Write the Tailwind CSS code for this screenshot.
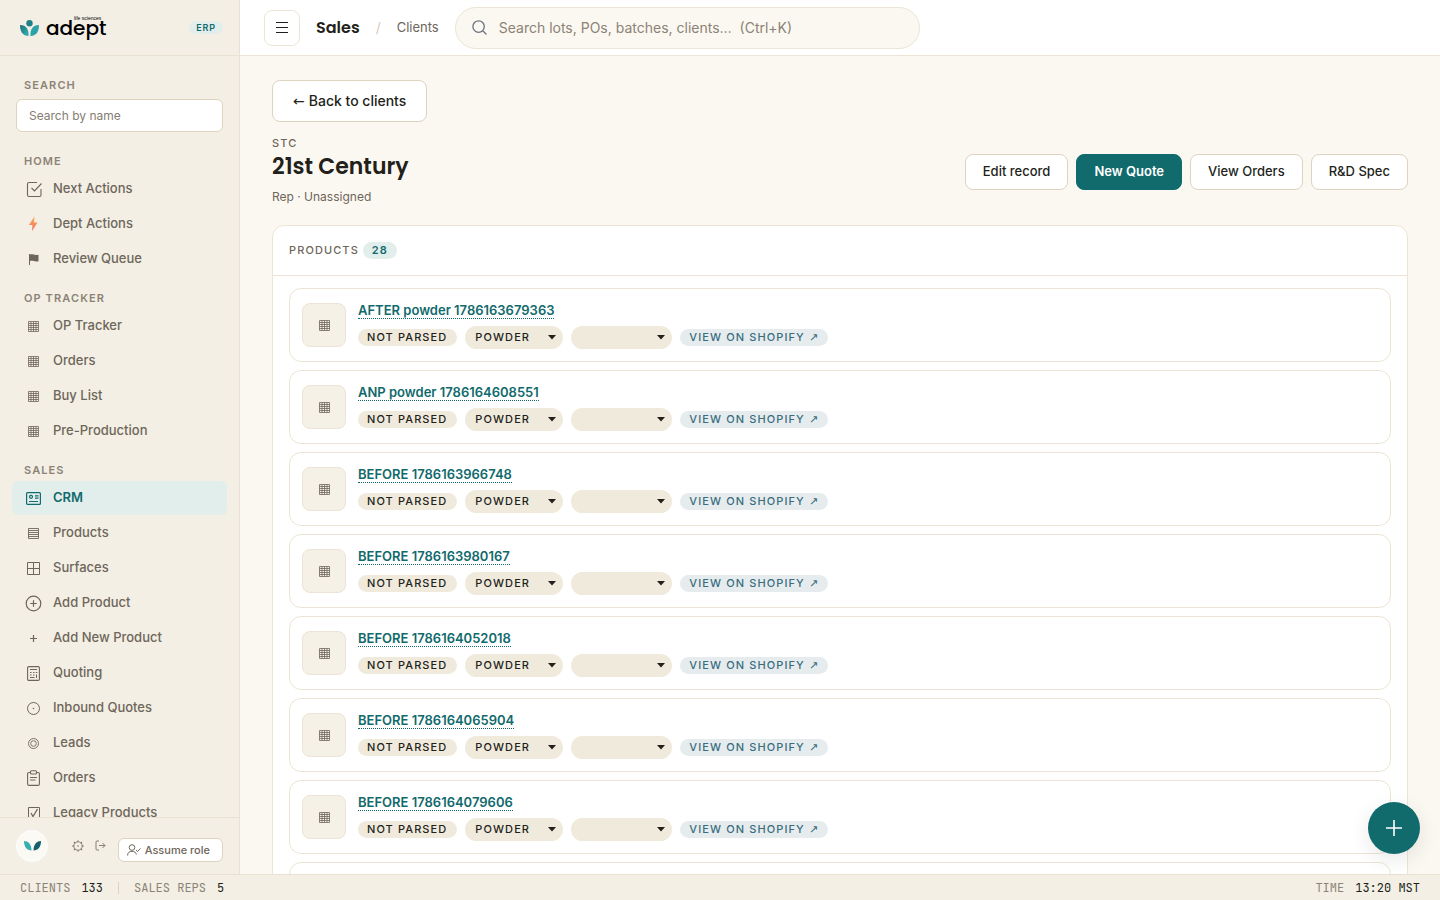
<!DOCTYPE html>
<html lang="en">

<head>
    <meta charset="UTF-8">
    <meta name="viewport" content="width=device-width, initial-scale=1.0">
    <script src="https://cdn.jsdelivr.net/npm/@tailwindcss/browser@4"></script>
    <title>21st Century - Clients - Adept ERP</title>
</head>

<body class="flex flex-col h-screen overflow-hidden font-['Inter','Liberation_Sans',sans-serif] bg-[#fbf8f1] text-[#231f1a]">
    <!-- icon sprite -->
    <svg class="hidden" aria-hidden="true">
        <symbol id="i-grid" viewBox="0 0 11 11">
            <path d="M.5.5h10v10H.5zM.5 2.5h10M.5 4.5h10M.5 6.5h10M.5 8.5h10M3 .5v10M5.5 .5v10M8 .5v10" fill="none" stroke="currentColor" stroke-width=".8" />
        </symbol>
        <symbol id="i-rows" viewBox="0 0 11 11">
            <path d="M.5.5h10v10H.5zM.5 2.5h10M.5 4.5h10M.5 6.5h10M.5 8.5h10" fill="none" stroke="currentColor" stroke-width=".9" />
        </symbol>
    </svg>

    <div class="flex flex-1 min-h-0">
        <!-- SIDEBAR -->
        <aside class="flex flex-col w-60 shrink-0 bg-[#f3efe4] border-r border-[#e9e2d3]">
            <div class="flex items-center justify-between h-14 px-4 pl-5 border-b border-[#e9e2d3] shrink-0">
                <a href="#" class="flex items-center gap-[7px] text-black" aria-label="adept life sciences">
                    <svg class="w-[19px] h-4" viewBox="0 0 19 16">
                        <defs>
                            <linearGradient id="leaf" x1="0" y1="0" x2="1" y2="1">
                                <stop offset="0" stop-color="#1b7078" />
                                <stop offset="1" stop-color="#35b5b8" />
                            </linearGradient>
                        </defs>
                        <circle cx="9.5" cy="3.2" r="3.2" fill="#1f7f86" />
                        <path d="M0 5c5 0 9 3 8.600 11C3 16 0 12 0 5z" fill="url(#leaf)" />
                        <path d="M19 5c-5 0-9 3-8.600 11C16 16 19 12 19 5z" fill="#2ba3a8" />
                    </svg>
                    <span class="relative font-['Poppins','DejaVu_Sans',sans-serif] text-xl leading-6 font-medium">adept<span class="absolute left-7 top-0 font-['Liberation_Sans',sans-serif] text-[5px] leading-none whitespace-nowrap">life sciences</span></span>
                </a>
                <span class="px-[7px] rounded-full bg-[#e2eeeb] text-[#116a6c] text-[9px] leading-[13px] font-semibold tracking-widest">ERP</span>
            </div>

            <nav class="flex-1 min-h-0 overflow-hidden px-3 text-[13px] font-medium text-[#6e665b]">
                <label for="nav-search" class="block pt-[22px] pb-[7px] px-3 text-[11px] leading-[14px] font-semibold tracking-widest text-[#8c8376]">SEARCH</label>
                <div class="px-1 pb-2">
                    <input id="nav-search" type="text" placeholder="Search by name"
                        class="block w-full h-[33px] px-3 rounded-md border border-[#ddd3bf] bg-white text-xs font-normal placeholder:text-[#857d71]">
                </div>

                <h2 class="px-3 pt-[14px] pb-1 text-[11px] leading-[14px] font-semibold tracking-widest text-[#8c8376]">HOME</h2>
                <a href="#" class="flex items-center h-[34px] mb-px px-3 gap-2.5 rounded-md">
                    <span class="flex justify-center w-[19px]"><svg class="w-[18px] h-[18px]" viewBox="0 0 18 18" fill="none" stroke="currentColor" stroke-width="1.1"><path d="M12 2.500H4A1.500 1.500 0 0 0 2.500 4v11A1.500 1.500 0 0 0 4 16.500h10.500A1.500 1.500 0 0 0 16 15V9M6.500 8l3 3L16.500 3.500" /></svg></span>
                    <span class="pb-px">Next Actions</span>
                </a>
                <a href="#" class="flex items-center h-[34px] mb-px px-3 gap-2.5 rounded-md">
                    <span class="flex justify-center w-[19px]">
                        <svg class="w-[9px] h-[14px]" viewBox="0 0 9 14">
                            <defs>
                                <linearGradient id="bolt" x1="0" y1="0" x2="0" y2="1">
                                    <stop offset="0" stop-color="#f9ae50" />
                                    <stop offset="1" stop-color="#f36a62" />
                                </linearGradient>
                            </defs>
                            <path d="M5 0L0 8h3.500L3 14l5.500-8.500H5L5.500 0z" fill="url(#bolt)" />
                        </svg>
                    </span>
                    <span class="pb-px">Dept Actions</span>
                </a>
                <a href="#" class="flex items-center h-[34px] mb-px px-3 gap-2.5 rounded-md">
                    <span class="flex justify-center w-[19px]"><svg class="w-[10px] h-[11px]" viewBox="0 0 10 11" fill="currentColor"><path d="M0 0h1v11H0zM1 .5c3-.8 4 1.200 8.500.3v6.400c-4 1-5.500-1-8.500-.2z" /></svg></span>
                    <span class="pb-px">Review Queue</span>
                </a>

                <h2 class="px-3 pt-[14px] pb-1 text-[11px] leading-[14px] font-semibold tracking-widest text-[#8c8376]">OP TRACKER</h2>
                <a href="#" class="flex items-center h-[34px] mb-px px-3 gap-2.5 rounded-md">
                    <span class="flex justify-center w-[19px]"><svg class="w-[11px] h-[11px]"><use href="#i-grid" /></svg></span>
                    <span class="pb-px">OP Tracker</span>
                </a>
                <a href="#" class="flex items-center h-[34px] mb-px px-3 gap-2.5 rounded-md">
                    <span class="flex justify-center w-[19px]"><svg class="w-[11px] h-[11px]"><use href="#i-grid" /></svg></span>
                    <span class="pb-px">Orders</span>
                </a>
                <a href="#" class="flex items-center h-[34px] mb-px px-3 gap-2.5 rounded-md">
                    <span class="flex justify-center w-[19px]"><svg class="w-[11px] h-[11px]"><use href="#i-grid" /></svg></span>
                    <span class="pb-px">Buy List</span>
                </a>
                <a href="#" class="flex items-center h-[34px] mb-px px-3 gap-2.5 rounded-md">
                    <span class="flex justify-center w-[19px]"><svg class="w-[11px] h-[11px]"><use href="#i-grid" /></svg></span>
                    <span class="pb-px">Pre-Production</span>
                </a>

                <h2 class="px-3 pt-[14px] pb-1 text-[11px] leading-[14px] font-semibold tracking-widest text-[#8c8376]">SALES</h2>
                <a href="#" class="flex items-center h-[34px] mb-px px-3 gap-2.5 rounded-md bg-[#e2eeeb] text-[#116a6c] font-semibold" aria-current="page">
                    <span class="flex justify-center w-[19px]"><svg class="w-[15px] h-[13px]" viewBox="0 0 15 13" fill="none" stroke="currentColor" stroke-width="1.2"><rect x=".6" y=".6" width="13.800" height="11.800" rx="1" /><circle cx="5" cy="4.800" r="1.500" /><path d="M9 3.800h3.500M9 6.200h3.500M3 9.500h9" /></svg></span>
                    <span class="pb-px">CRM</span>
                </a>
                <a href="#" class="flex items-center h-[34px] mb-px px-3 gap-2.5 rounded-md">
                    <span class="flex justify-center w-[19px]"><svg class="w-[11px] h-[11px]"><use href="#i-rows" /></svg></span>
                    <span class="pb-px">Products</span>
                </a>
                <a href="#" class="flex items-center h-[34px] mb-px px-3 gap-2.5 rounded-md">
                    <span class="flex justify-center w-[19px]"><svg class="w-[13px] h-[13px]" viewBox="0 0 13 13" fill="none" stroke="currentColor"><path d="M.5.5h12v12H.5zM6.500.5v12M.5 6.500h12" /></svg></span>
                    <span class="pb-px">Surfaces</span>
                </a>
                <a href="#" class="flex items-center h-[34px] mb-px px-3 gap-2.5 rounded-md">
                    <span class="flex justify-center w-[19px]"><svg class="w-[17px] h-[17px]" viewBox="0 0 17 17" fill="none" stroke="currentColor" stroke-width="1.200"><circle cx="8.500" cy="8.500" r="7.300" /><path d="M8.500 5.200v6.600M5.200 8.500h6.600" /></svg></span>
                    <span class="pb-px">Add Product</span>
                </a>
                <a href="#" class="flex items-center h-[34px] mb-px px-3 gap-2.5 rounded-md">
                    <span class="flex justify-center w-[19px]"><svg class="w-[7px] h-[7px]" viewBox="0 0 7 7" fill="none" stroke="currentColor" stroke-width="1.200"><path d="M3.500 0v7M0 3.500h7" /></svg></span>
                    <span class="pb-px">Add New Product</span>
                </a>
                <a href="#" class="flex items-center h-[34px] mb-px px-3 gap-2.5 rounded-md">
                    <span class="flex justify-center w-[19px]"><svg class="w-[13px] h-[15px]" viewBox="0 0 13 15" fill="none" stroke="currentColor"><rect x=".6" y=".6" width="11.800" height="13.800" rx="1.200" stroke-width="1.100" /><path d="M3 3.500h7M3 6.500h1.500M6 6.500h1.500M8.800 6.500h1.500M3 9h1.500M6 9h1.500M3 11.500h4.500M9.500 8.500v3.500" /></svg></span>
                    <span class="pb-px">Quoting</span>
                </a>
                <a href="#" class="flex items-center h-[34px] mb-px px-3 gap-2.5 rounded-md">
                    <span class="flex justify-center w-[19px]"><svg class="w-[13px] h-[13px]" viewBox="0 0 13 13" fill="none" stroke="currentColor"><circle cx="6.500" cy="6.500" r="6" /><circle cx="6.500" cy="6.500" r=".8" fill="currentColor" stroke="none" /></svg></span>
                    <span class="pb-px">Inbound Quotes</span>
                </a>
                <a href="#" class="flex items-center h-[34px] mb-px px-3 gap-2.5 rounded-md">
                    <span class="flex justify-center w-[19px]"><svg class="w-[11px] h-[11px]" viewBox="0 0 11 11" fill="none" stroke="currentColor" stroke-width=".9"><circle cx="5.500" cy="5.500" r="5" /><circle cx="5.500" cy="5.500" r="2.800" /></svg></span>
                    <span class="pb-px">Leads</span>
                </a>
                <a href="#" class="flex items-center h-[34px] mb-px px-3 gap-2.5 rounded-md">
                    <span class="flex justify-center w-[19px]"><svg class="w-[13px] h-4" viewBox="0 0 13 16" fill="none" stroke="currentColor" stroke-width="1.100"><path d="M3.500 2.500h-1.500A1.400 1.400 0 0 0 .6 4v10A1.400 1.400 0 0 0 2 15.400h9a1.400 1.400 0 0 0 1.400-1.400V4A1.400 1.400 0 0 0 11 2.500H9.500" /><rect x="3.500" y=".8" width="6" height="3.200" rx="1" /><path d="M3 7.500h7M3 10h5.500" /></svg></span>
                    <span class="pb-px">Orders</span>
                </a>
                <a href="#" class="flex items-center h-[34px] mb-px px-3 gap-2.5 rounded-md">
                    <span class="flex justify-center w-[19px]"><svg class="w-3 h-3" viewBox="0 0 12 12" fill="none" stroke="currentColor"><path d="M.5.5h11v11H.5z" /><path d="M3 6l2 3.500L9.500 2" stroke-width="1.300" /></svg></span>
                    <span class="pb-px">Legacy Products</span>
                </a>
            </nav>

            <div class="flex items-center h-[57px] px-4 pb-px border-t border-[#e9e2d3] shrink-0 text-[#857d71]">
                <span class="flex items-center justify-center w-8 h-8 rounded-full bg-[#fbf9f3] border border-white">
                    <svg class="w-[17px] h-[10px]" viewBox="0 0 17 10">
                        <path d="M0 0c4 0 7.500 3 7.500 9.500C3 9.500 0 6 0 0z" fill="#35b0ae" />
                        <path d="M17 0c-4 0-7.500 3-7.500 9.500C14 9.500 17 6 17 0z" fill="#15606a" />
                    </svg>
                </span>
                <button type="button" class="ml-6" aria-label="Settings">
                    <svg class="w-3 h-3" viewBox="0 0 12 12" fill="none" stroke="currentColor"><circle cx="6" cy="6" r="4.200" /><circle cx="6" cy="6" r=".8" fill="currentColor" stroke="none" /><path stroke-width="1.300" d="M6 .4v1.400M6 10.200v1.400M.4 6h1.400M10.200 6h1.400M2 2l1 1M9 9l1 1M10 2L9 3M3 9l-1 1" /></svg>
                </button>
                <button type="button" class="ml-[11px]" aria-label="Sign out">
                    <svg class="w-[11px] h-[11px]" viewBox="0 0 11 11" fill="none" stroke="currentColor"><path d="M4 1H2a1 1 0 0 0-1 1v7a1 1 0 0 0 1 1h2M4 5.500h6M7.500 3L10 5.500 7.500 8" /></svg>
                </button>
                <button type="button" class="flex items-center self-end h-6 mb-[11px] ml-auto gap-1 pl-2 pr-3 rounded-md border border-[#ddd3bf] bg-white text-[11px] font-medium text-[#6e665b] whitespace-nowrap">
                    <svg class="w-[14px] h-3" viewBox="0 0 14 12" fill="none" stroke="currentColor"><circle cx="5" cy="3.500" r="2.800" /><path d="M.6 11.500C.6 8.500 2.500 7.300 5 7.300s4 1.200 4.300 3.200M9 6l1.500 1.500L13.500 4.500" /></svg>
                    Assume role
                </button>
            </div>
        </aside>

        <!-- CONTENT -->
        <div class="flex flex-col flex-1 min-w-0">
            <header class="flex items-center h-14 px-6 gap-4 bg-white border-b border-[#ece4d6] shrink-0">
                <button type="button" aria-label="Toggle menu" class="flex items-center justify-center w-9 h-9 rounded-lg border border-[#ece4d6]">
                    <svg class="w-3 h-[11px]" viewBox="0 0 12 11" fill="none" stroke="currentColor" stroke-width="1.200"><path d="M0 .5h12M0 5.500h12M0 10.500h12" /></svg>
                </button>
                <span class="font-['Poppins','Inter',sans-serif] text-base font-semibold">Sales</span>
                <span class="text-sm text-[#d5cbb9]">/</span>
                <a href="#" class="text-[13px] text-[#6e665b]">Clients</a>
                <label class="flex items-center w-[465px] h-[42px] px-4 gap-3 rounded-full border border-[#ece4d6] bg-[#fbf8f1]">
                    <svg class="w-[15px] h-[15px] shrink-0 text-[#6b7280]" viewBox="0 0 15 15" fill="none" stroke="currentColor" stroke-width="1.300" stroke-linecap="round"><circle cx="6.600" cy="6.600" r="5.700" /><path d="M11 11l3 3" /></svg>
                    <input type="text" aria-label="Search" placeholder="Search lots, POs, batches, clients…&nbsp; (Ctrl+K)" class="flex-1 min-w-0 text-sm outline-none placeholder:text-[#8c8376]">
                </label>
            </header>

            <main class="flex-1 min-h-0 overflow-hidden px-8 pt-6">
                <a href="#" class="flex items-center w-fit h-[42px] px-5 gap-1 rounded-lg border border-[#ddd3bf] bg-white text-sm font-medium"><span class="font-['DejaVu_Sans',sans-serif] font-normal">←</span>Back to clients</a>

                <div class="flex items-center justify-between mt-[15px] mb-[18px]">
                    <div>
                        <p class="text-[11px] leading-3 font-medium tracking-widest text-[#6e665b]">STC</p>
                        <h1 class="font-['Poppins','Inter',sans-serif] text-[22px] leading-9 font-semibold">21st Century</h1>
                        <p class="mt-0.5 text-xs leading-5 text-[#6e665b]">Rep · Unassigned</p>
                    </div>
                    <div class="flex gap-2 text-[13px] font-medium">
                        <button type="button" class="h-9 px-[17px] rounded-lg border border-[#ddd3bf] bg-white">Edit record</button>
                        <button type="button" class="h-9 px-[17px] rounded-lg border border-[#116a6c] bg-[#116a6c] text-white font-semibold">New Quote</button>
                        <button type="button" class="h-9 px-[17px] rounded-lg border border-[#ddd3bf] bg-white">View Orders</button>
                        <button type="button" class="h-9 px-[17px] rounded-lg border border-[#ddd3bf] bg-white">R&amp;D Spec</button>
                    </div>
                </div>

                <section class="rounded-xl border border-[#ece4d6] bg-white">
                    <div class="flex items-center h-[50px] px-4 gap-1 border-b border-[#ece4d6]">
                        <h2 class="text-[11px] font-medium tracking-widest text-[#6e665b]">PRODUCTS</h2>
                        <span class="px-[9px] rounded-full bg-[#e2eeeb] text-[#116a6c] text-[11px] leading-[17px] font-semibold tracking-widest">28</span>
                    </div>
                    <ul id="products" class="flex flex-col gap-2 px-4 py-3"></ul>
                </section>
            </main>
        </div>
    </div>

    <!-- STATUS BAR -->
    <footer class="flex items-center justify-between h-[26px] px-5 border-t border-[#e9e2d3] bg-[#f3efe4] font-['JetBrains_Mono','Liberation_Mono',monospace] text-xs text-[#8c8376] shrink-0">
        <div class="flex items-center gap-[15px]">
            <span>CLIENTS<span class="ml-[11px] text-[#231f1a]">133</span></span>
            <span class="w-px h-3 bg-[#ddd3bf]"></span>
            <span>SALES REPS<span class="ml-[11px] text-[#231f1a]">5</span></span>
        </div>
        <span>TIME<span class="ml-[11px] text-[#231f1a]">13:20 MST</span></span>
    </footer>

    <button type="button" aria-label="Create" class="fixed right-5 bottom-[46px] flex items-center justify-center w-[52px] h-[52px] rounded-full bg-[#116a6c] text-white shadow-[0_6px_20px_rgba(35,31,26,0.10)]">
        <svg class="w-4 h-4" viewBox="0 0 16 16" fill="none" stroke="currentColor" stroke-width="1.600"><path d="M8 0v16M0 8h16" /></svg>
    </button>

    <script>
        const products = [
            "AFTER powder 1786163679363",
            "ANP powder 1786164608551",
            "BEFORE 1786163966748",
            "BEFORE 1786163980167",
            "BEFORE 1786164052018",
            "BEFORE 1786164065904",
            "BEFORE 1786164079606",
            "BEFORE 1786164093317",
        ];

        const arrow = `<svg class="absolute right-[7px] top-[9px] w-2 h-[5px] pointer-events-none" viewBox="0 0 8 5"><path d="M0 0h8L4 4.500z" fill="#231f1a" /></svg>`;

        document.getElementById("products").innerHTML = products.map((name) => `
            <li class="flex items-center p-3 gap-3 rounded-xl border border-[#ece4d6]">
                <span class="flex items-center justify-center w-11 h-11 rounded-lg border border-[#ece4d6] bg-[#f5f1e7] text-[#6e665b]">
                    <svg class="w-[11px] h-[11px]"><use href="#i-grid" /></svg>
                </span>
                <div>
                    <a href="#" class="block w-fit h-[18px] mb-[7px] border-b border-dotted border-[#116a6c] text-[13px] leading-[18px] font-semibold text-[#116a6c]">${name}</a>
                    <div class="flex items-center gap-2 text-[11px] leading-[17px] font-medium tracking-widest">
                        <span class="pl-[9px] pr-2.5 rounded-full bg-[#f0eadd]">NOT PARSED</span>
                        <span class="relative">
                            <select aria-label="Form" class="block appearance-none w-[98px] h-[23px] pl-2.5 rounded-full bg-[#f0eadd]"><option>POWDER</option></select>${arrow}
                        </span>
                        <span class="relative">
                            <select aria-label="Category" class="block appearance-none w-[101px] h-[23px] pl-2.5 rounded-full bg-[#f0eadd]"><option></option></select>${arrow}
                        </span>
                        <a href="#" class="flex px-[9px] rounded-full bg-[#e6ecee] text-[#3a6d80]">VIEW ON SHOPIFY&nbsp;<span class="font-['DejaVu_Sans',sans-serif]">↗</span></a>
                    </div>
                </div>
            </li>`).join("");
    </script>
</body>

</html>
